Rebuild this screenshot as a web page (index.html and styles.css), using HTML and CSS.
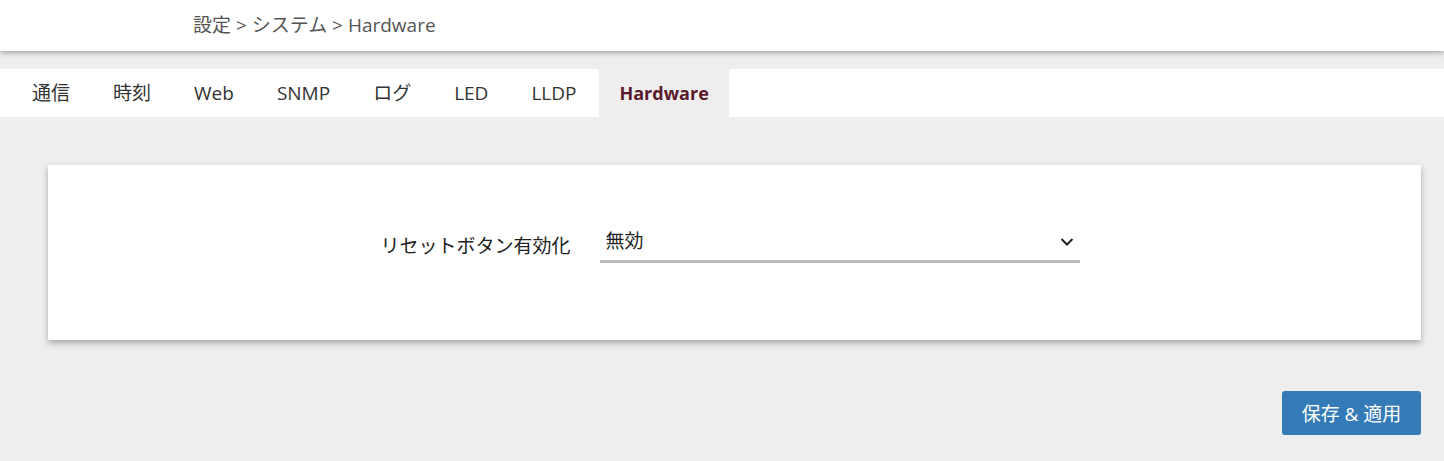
FILE: index.html
```html
<!DOCTYPE html>
<html lang="ja">
<head>
    <meta charset="UTF-8">
    <meta name="viewport" content="width=device-width, initial-scale=1.0">
    <title>Hardware</title>
    <link rel="stylesheet" href="styles.css">
</head>
<body>
    <header class="header">
        <div class="breadcrumb">設定 &gt; システム &gt; Hardware</div>
    </header>

    <ul class="tabs">
        <li><a href="#">通信</a></li>
        <li><a href="#">時刻</a></li>
        <li><a href="#">Web</a></li>
        <li><a href="#">SNMP</a></li>
        <li><a href="#">ログ</a></li>
        <li><a href="#">LED</a></li>
        <li><a href="#">LLDP</a></li>
        <li class="active"><a href="#">Hardware</a></li>
    </ul>

    <div class="content">
        <div class="card">
            <div class="field">
                <label for="reset">リセットボタン有効化</label>
                <div class="select-wrap">
                    <select id="reset">
                        <option>無効</option>
                        <option>有効</option>
                    </select>
                    <svg class="chevron" width="14" height="10" viewBox="0 0 14 10">
                        <path d="M1.5 2 L7 7.5 L12.5 2" fill="none" stroke="#222" stroke-width="2"/>
                    </svg>
                </div>
            </div>
        </div>

        <div class="actions">
            <button type="button">保存 &amp; 適用</button>
        </div>
    </div>
</body>
</html>
```

FILE: styles.css
```css
body {
    font-family: "Open Sans", "Noto Sans CJK JP", sans-serif;
    font-size: 19px;
    background-color: #eeeeee;
    margin: 0;
    color: #333;
}

.header {
    background: white;
    height: 51px;
    box-shadow: 0px 2px 5px rgba(0, 0, 0, 0.3);
    position: relative;
}

.breadcrumb {
    padding-left: 193px;
    line-height: 50px;
    color: #555;
}

.tabs {
    list-style: none;
    margin: 18px 0 0;
    padding: 0 0 0 12px;
    background: white;
    display: flex;
    gap: 3px;
}

.tabs li a {
    display: block;
    padding: 0 20px;
    line-height: 48px;
    color: #333;
    text-decoration: none;
}

.tabs li.active a {
    background: #eeeeee;
    color: #5a1a2c;
    font-weight: bold;
    font-size: 18px;
}

.content {
    margin: 48px 23px 0 48px;
}

.card {
    background: white;
    height: 175px;
    box-sizing: border-box;
    padding-top: 59px;
    box-shadow: 0px 3px 6px rgba(0, 0, 0, 0.3);
    display: flex;
    justify-content: center;
    align-items: flex-start;
}

.field {
    display: flex;
    align-items: center;
    gap: 29px;
    margin-right: 9px;
}

.field label {
    color: #222;
    margin-top: 2px;
}

.select-wrap {
    position: relative;
    width: 480px;
}

.select-wrap select {
    width: 100%;
    height: 39px;
    box-sizing: border-box;
    appearance: none;
    border: none;
    border-bottom: 3px solid #bbb;
    border-radius: 0;
    background: transparent;
    font-family: inherit;
    font-size: 19px;
    color: #222;
    padding: 0 6px 3px;
    outline: none;
}

.chevron {
    position: absolute;
    right: 6px;
    top: 13px;
    pointer-events: none;
}

.actions {
    display: flex;
    justify-content: flex-end;
    margin-top: 51px;
}

button {
    width: 139px;
    height: 44px;
    background-color: #337ab7;
    color: white;
    border: none;
    border-radius: 3px;
    font-family: inherit;
    font-size: 19px;
    cursor: pointer;
}
```
